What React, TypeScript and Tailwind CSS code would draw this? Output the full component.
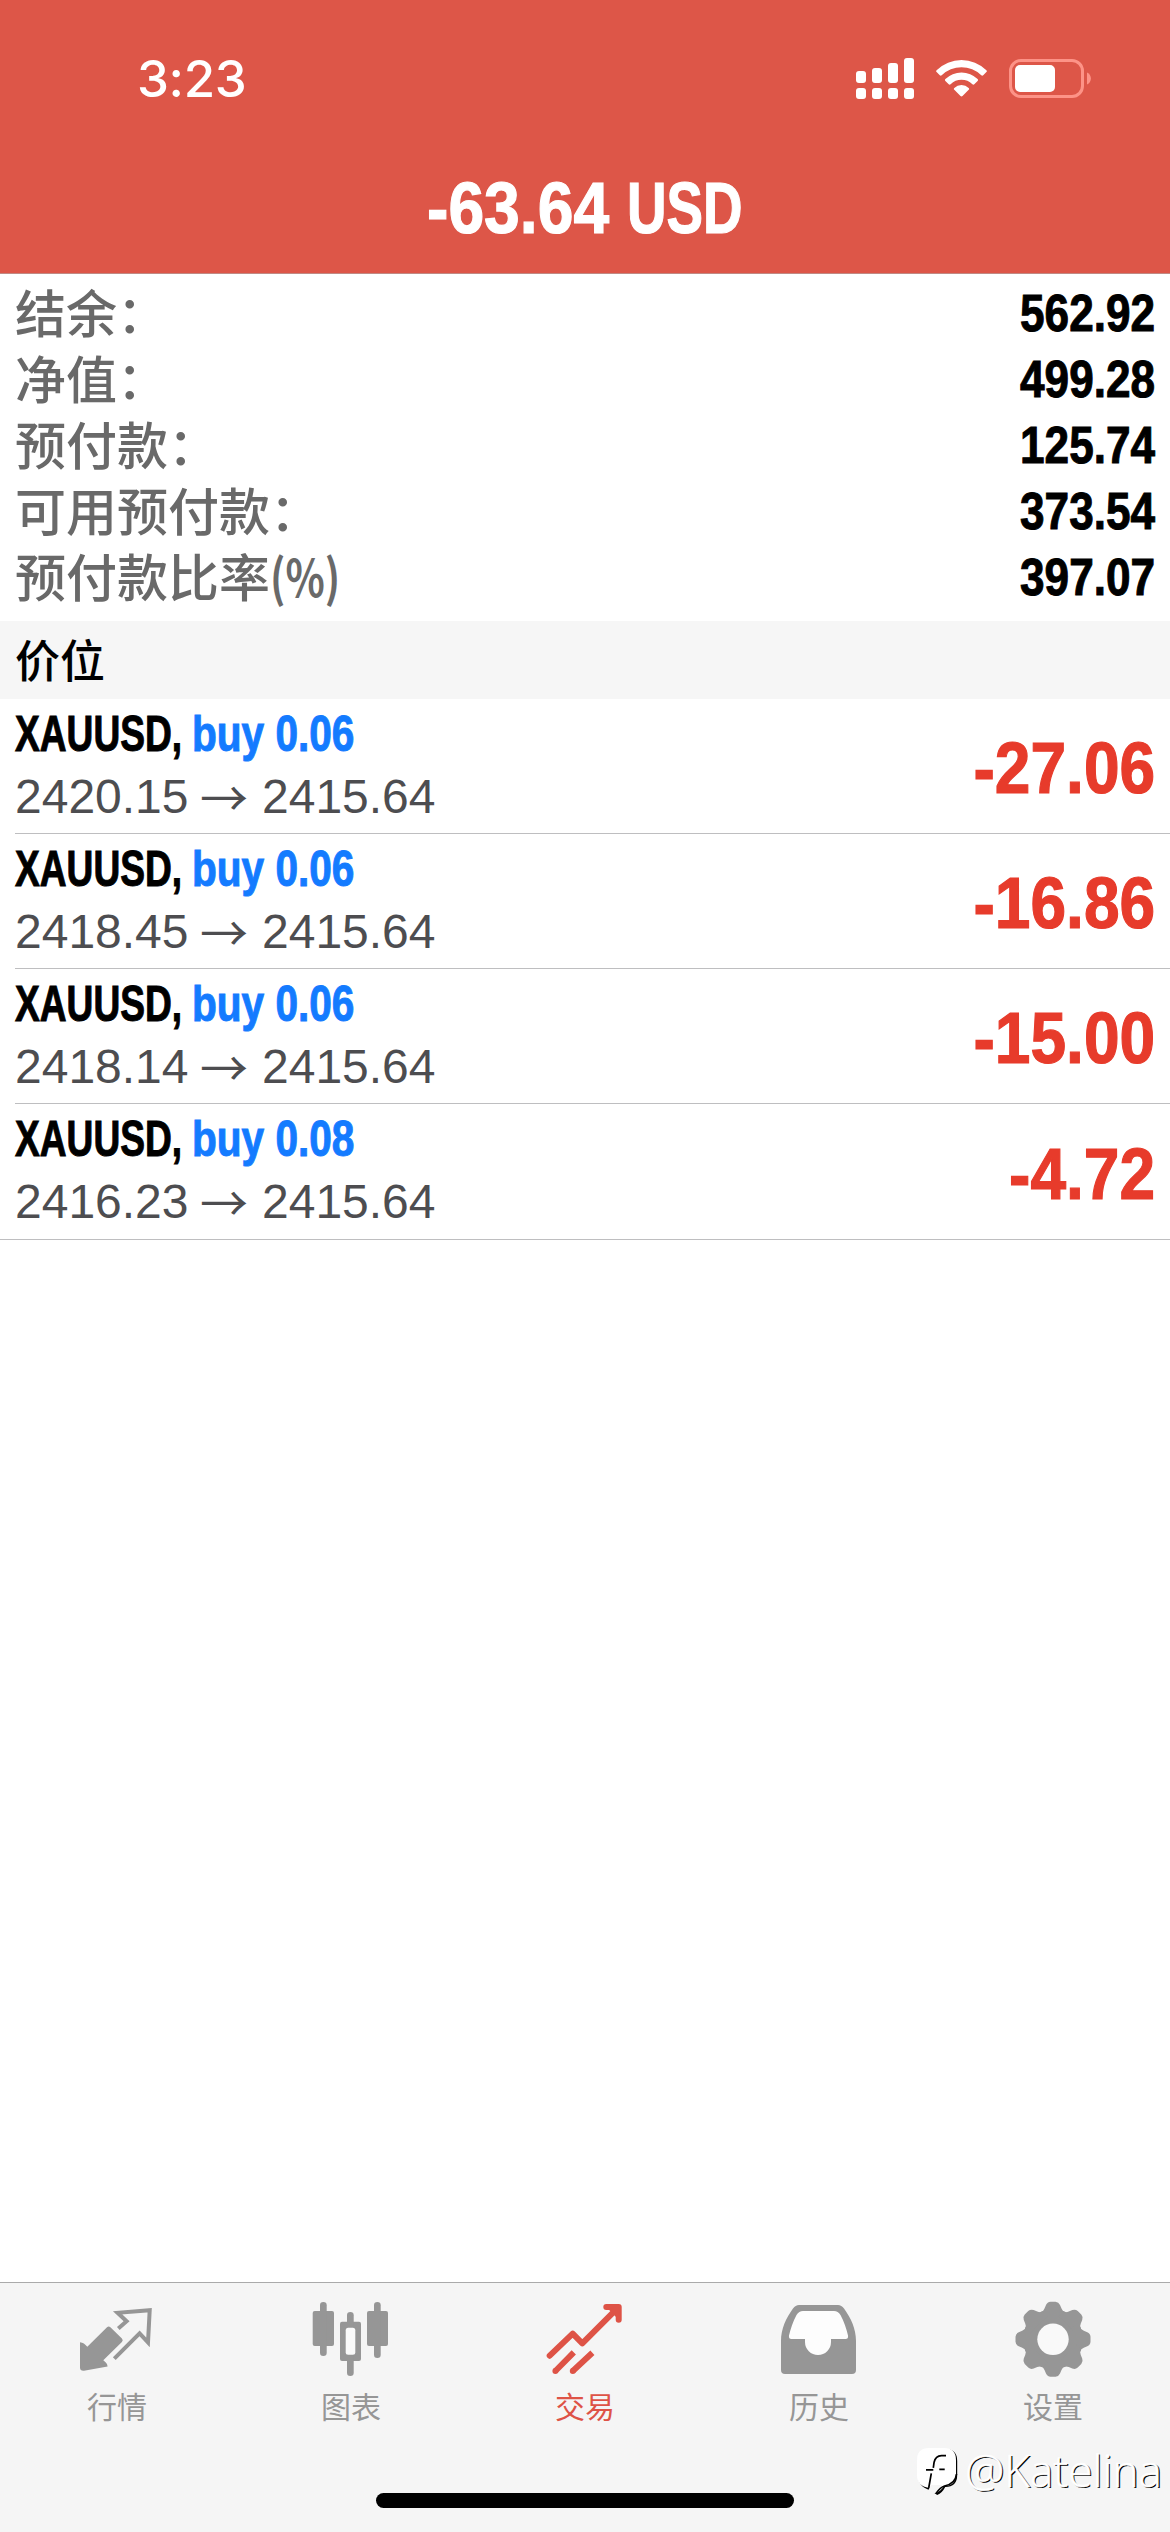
import type { ReactNode } from "react";

type Position = {
  id: number;
  volume: string;
  open: string;
  current: string;
  profit: string;
};

const summary = [
  { label: "结余：", value: "562.92" },
  { label: "净值：", value: "499.28" },
  { label: "预付款：", value: "125.74" },
  { label: "可用预付款：", value: "373.54" },
  { label: "预付款比率", suffix: "(%)", value: "397.07" },
];

const positions: Position[] = [
  { id: 1, volume: "0.06", open: "2420.15", current: "2415.64", profit: "-27.06" },
  { id: 2, volume: "0.06", open: "2418.45", current: "2415.64", profit: "-16.86" },
  { id: 3, volume: "0.06", open: "2418.14", current: "2415.64", profit: "-15.00" },
  { id: 4, volume: "0.08", open: "2416.23", current: "2415.64", profit: "-4.72" },
];

function StatusBar() {
  return (
    <div className="flex h-[156px] items-center justify-between pl-[137px] pr-[79px]">
      <span className="font-['Inter',sans-serif] text-[51px] font-medium leading-none tracking-[-0.4px]">
        3:23
      </span>
      <div className="flex items-center gap-[22px]">
        <svg width="58" height="41" viewBox="0 0 58 41" fill="currentColor">
          <rect x="0" y="13" width="10" height="12" rx="3" />
          <rect x="16" y="10" width="10" height="15" rx="3" />
          <rect x="32" y="5" width="10" height="20" rx="3" />
          <rect x="48" y="0" width="10" height="25" rx="3" />
          <rect x="0" y="30" width="10" height="11" rx="3" />
          <rect x="16" y="30" width="10" height="11" rx="3" />
          <rect x="32" y="30" width="10" height="11" rx="3" />
          <rect x="48" y="30" width="10" height="11" rx="3" />
        </svg>
        <svg width="51" height="37" viewBox="0 0 51 37" fill="currentColor">
          <path d="M.6 10.2a35.5 35.5 0 0 1 49.8 0c.6.6.6 1.3 0 1.9l-3.2 3.2c-.6.6-1.3.6-1.9 0a28.4 28.4 0 0 0-39.6 0c-.6.6-1.3.6-1.9 0L.6 12.1c-.6-.6-.6-1.3 0-1.9Z" />
          <path d="M9.4 19a23 23 0 0 1 32.2 0c.6.6.6 1.3 0 1.9l-3.3 3.3c-.6.6-1.3.6-1.9 0a15.7 15.7 0 0 0-21.8 0c-.6.6-1.3.6-1.9 0l-3.3-3.3c-.6-.6-.6-1.3 0-1.9Z" />
          <path d="M18.3 27.9a10.6 10.6 0 0 1 14.4 0c.6.6.6 1.3 0 1.9l-6.2 6.3c-.6.6-1.4.6-2 0l-6.2-6.3c-.6-.6-.6-1.3 0-1.9Z" />
        </svg>
        <svg width="82" height="39" viewBox="0 0 82 39">
          <rect x="1.5" y="1.5" width="72" height="36" rx="10.5" fill="none" stroke="#fd9387" strokeWidth="3" />
          <rect x="6" y="6" width="40" height="27" rx="5" fill="#fff" />
          <path d="M78 13.5c5.2 2 5.2 10 0 12Z" fill="#fd9387" />
        </svg>
      </div>
    </div>
  );
}

function PositionRow({ position, last }: { position: Position; last: boolean }) {
  return (
    <div className={last ? "border-b border-[#bebec0]" : "pl-[15px]"}>
      <div
        className={
          last
            ? "flex h-[135px] items-center justify-between pl-[15px] pr-[15px]"
            : "flex h-[135px] items-center justify-between border-b border-[#bebec0] pr-[15px]"
        }
      >
        <div className="mt-[-2px]">
          <div className="flex h-[62px] items-center text-[49.5px] font-bold leading-[62px] [-webkit-text-stroke:1px_currentColor]">
            <span className="w-[177px] origin-left scale-x-[0.75] whitespace-nowrap">XAUUSD,</span>
            <span className="origin-left scale-x-[0.82] whitespace-nowrap text-[#147bff]">
              buy {position.volume}
            </span>
          </div>
          <div className="flex h-[63px] items-center text-[48px] leading-[63px] text-[#4d4d50]">
            <span className="w-[185px]">{position.open}</span>
            <span className="mt-[-3px] w-[62px] font-['Noto_Sans_CJK_SC',sans-serif] leading-none">→</span>
            <span>{position.current}</span>
          </div>
        </div>
        <span className="mt-[4px] origin-right scale-x-[0.89] text-[72px] font-bold leading-none text-[#e73b2b] [-webkit-text-stroke:1.2px_currentColor]">
          {position.profit}
        </span>
      </div>
    </div>
  );
}

function QuotesIcon() {
  return (
    <svg width="80" height="80" viewBox="0 0 80 80" fill="none">
      <path
        d="M41.3 29.6 49.6 22.2 40.6 13.8 72.7 11.2 71 43.4 62.6 34.4 37.3 59.6"
        stroke="currentColor"
        strokeWidth="4"
        strokeLinejoin="miter"
      />
      <path
        d="M3 43.2c3 .1 4.9 2 7.3 4.6L30 28.3q1.7-1.7 3.4 0L44.9 39.6q1.7 1.7 0 3.4L26.3 61.3c1.9 1.6 4 2.9 4.3 6.2L7 71.7Q3 72 3 68.5Z"
        fill="currentColor"
      />
    </svg>
  );
}

function ChartIcon() {
  return (
    <svg width="80" height="80" viewBox="0 0 80 80" fill="currentColor">
      <rect x="1.7" y="12" width="21.3" height="35" rx="2" />
      <rect x="9" y="3" width="6.7" height="54" rx="3.3" />
      <rect x="29" y="22.7" width="21" height="39.3" rx="2" />
      <rect x="36" y="13" width="6.7" height="64" rx="3.3" />
      <rect x="34.7" y="28.7" width="9.6" height="27" rx="2.5" fill="#fafafa" />
      <rect x="56" y="12" width="21" height="35" rx="2" />
      <rect x="63" y="3" width="6.7" height="56" rx="3.3" />
    </svg>
  );
}

function TradeIcon() {
  return (
    <svg width="80" height="80" viewBox="0 0 80 80" fill="none" stroke="currentColor" strokeWidth="6">
      <path d="M4.7 56.7 27.7 34.7 37.3 44.3 72 9.6" strokeLinecap="round" strokeLinejoin="round" />
      <path d="M61.3 8H73.7V20.7Z" fill="currentColor" stroke="none" />
      <path d="M61.3 8H73.7V20.7" strokeLinecap="round" strokeLinejoin="round" />
      <path d="M10.4 72 28.8 53.4M27.8 72 47.4 53.8" />
      <path d="M10.4 72h.01M27.8 72h.01" strokeLinecap="round" />
    </svg>
  );
}

function HistoryIcon() {
  return (
    <svg width="80" height="80" viewBox="0 0 80 80">
      <path
        d="M20 6H59Q62.5 6 65 9.5C72 19 77 30 77 42V71Q77 75 73 75H6Q2 75 2 71V42C2 30 7 19 14 9.5Q16.5 6 20 6Z"
        fill="currentColor"
      />
      <path
        d="M24 12H55Q59 12 61.5 16C65 22.5 67.5 30 69 36.5Q69.5 40 66.5 40H52V43A13 13 0 0 1 26 43V40H12.5Q9.5 40 10 36.5C11.5 30 14 22.5 17.5 16Q20 12 24 12Z"
        fill="#fdfdfd"
      />
    </svg>
  );
}

const toothAngles = [0, 45, 90, 135, 180, 225, 270, 315];

function SettingsIcon() {
  return (
    <svg width="80" height="80" viewBox="0 0 80 80" fill="currentColor">
      <circle cx="40" cy="40.3" r="30" />
      {toothAngles.map((angle) => (
        <path
          key={angle}
          d="M27.5 13.5Q30.5 12.5 31.5 9.5L33 6Q34.3 3 37.5 2.8H42.5Q45.7 3 47 6L48.5 9.5Q49.5 12.5 52.5 13.5V20H27.5Z"
          transform={`rotate(${angle} 40 40.3)`}
        />
      ))}
      <circle cx="40" cy="40.3" r="15.7" fill="#f9f9f9" />
    </svg>
  );
}

function Tab({ icon, label, active }: { icon: ReactNode; label: string; active?: boolean }) {
  return (
    <div
      className={
        active
          ? "flex flex-1 flex-col items-center pt-[16px] text-[#de5346]"
          : "flex flex-1 flex-col items-center pt-[16px] text-[#969696]"
      }
    >
      {icon}
      <span className="mt-[7px] text-[30px] leading-[44px]">{label}</span>
    </div>
  );
}

function Watermark() {
  return (
    <div className="absolute right-[8px] top-[2443px] flex items-center gap-[5px] text-white">
      <svg className="mt-[4px]" width="44" height="50" viewBox="0 0 44 50">
        <path
          d="M13 1h15q12 0 12 12v14q0 12-12 12-3 6-8 8l-7-5Q1 39 1 28V13Q1 1 13 1Z"
          fill="#000"
          transform="translate(1.2 1)"
        />
        <path d="M13 1h15q12 0 12 12v14q0 12-12 12-3 5-8 7l-7-5Q1 39 1 28V13Q1 1 13 1Z" fill="#fff" />
        <path d="m14 38-2 8h9l5-8Z" fill="#f5f5f5" />
        <path
          d="M30 8.700h-4.500q-6 .3-7.400 6.500l-.8 5.600M10 22.900h7.300M23.300 22.300h5.400M15.300 26.300 12.700 41M40.500 27q-.8 9.500-12 12-4 1-8.500 7.500"
          fill="none"
          stroke="#000"
          strokeWidth="1.7"
        />
      </svg>
      <span className="font-['Open_Sans',sans-serif] text-[44px] font-light leading-[50px] tracking-[0.1px] [-webkit-text-stroke:0.5px_#fff] [text-shadow:1.4px_1px_0_#000]">
        @Katelina
      </span>
    </div>
  );
}

export default function App() {
  return (
    <div className="relative flex h-[2532px] w-[1170px] flex-col overflow-hidden bg-white font-['Liberation_Sans','Noto_Sans_CJK_SC',sans-serif]">
      <header className="h-[274px] border-b border-[#c08a84] bg-[#dd5648] text-white">
        <StatusBar />
        <div className="flex h-[102px] items-center pl-[427px] text-[73px] font-bold leading-none [-webkit-text-stroke:1.2px_currentColor]">
          <span className="w-[200px] origin-left scale-x-[0.88] whitespace-nowrap">-63.64</span>
          <span className="origin-left scale-x-[0.75]">USD</span>
        </div>
      </header>

      <section className="h-[347px] pl-[15px] pr-[15px] pt-[6px]">
        {summary.map((item) => (
          <div key={item.label} className="flex h-[66px] items-center justify-between">
            <span className="mt-[-5px] flex font-['Noto_Sans_CJK_SC',sans-serif] text-[51px] font-medium leading-[56px] text-[#696969]">
              {item.label}
              {item.suffix && (
                <span className="origin-left scale-x-[0.8] font-bold">{item.suffix}</span>
              )}
            </span>
            <span className="origin-right scale-x-[0.865] text-[51px] font-bold leading-none text-black [-webkit-text-stroke:1px_currentColor]">
              {item.value}
            </span>
          </div>
        ))}
      </section>

      <h2 className="h-[78px] bg-[#f6f6f6] pl-[15px] font-['Noto_Sans_CJK_SC',sans-serif] text-[45px] font-medium leading-[75px] text-black">
        价位
      </h2>

      <main className="flex-1">
        {positions.map((position, i) => (
          <PositionRow key={position.id} position={position} last={i === positions.length - 1} />
        ))}
      </main>

      <nav className="flex h-[250px] flex-col items-center border-t border-[#aaaaaa] bg-[#f5f5f5]">
        <div className="flex w-full">
          <Tab icon={<QuotesIcon />} label="行情" />
          <Tab icon={<ChartIcon />} label="图表" />
          <Tab icon={<TradeIcon />} label="交易" active />
          <Tab icon={<HistoryIcon />} label="历史" />
          <Tab icon={<SettingsIcon />} label="设置" />
        </div>
        <div className="mb-[24px] mt-auto h-[15px] w-[418px] rounded-full bg-black" />
      </nav>

      <Watermark />
    </div>
  );
}
